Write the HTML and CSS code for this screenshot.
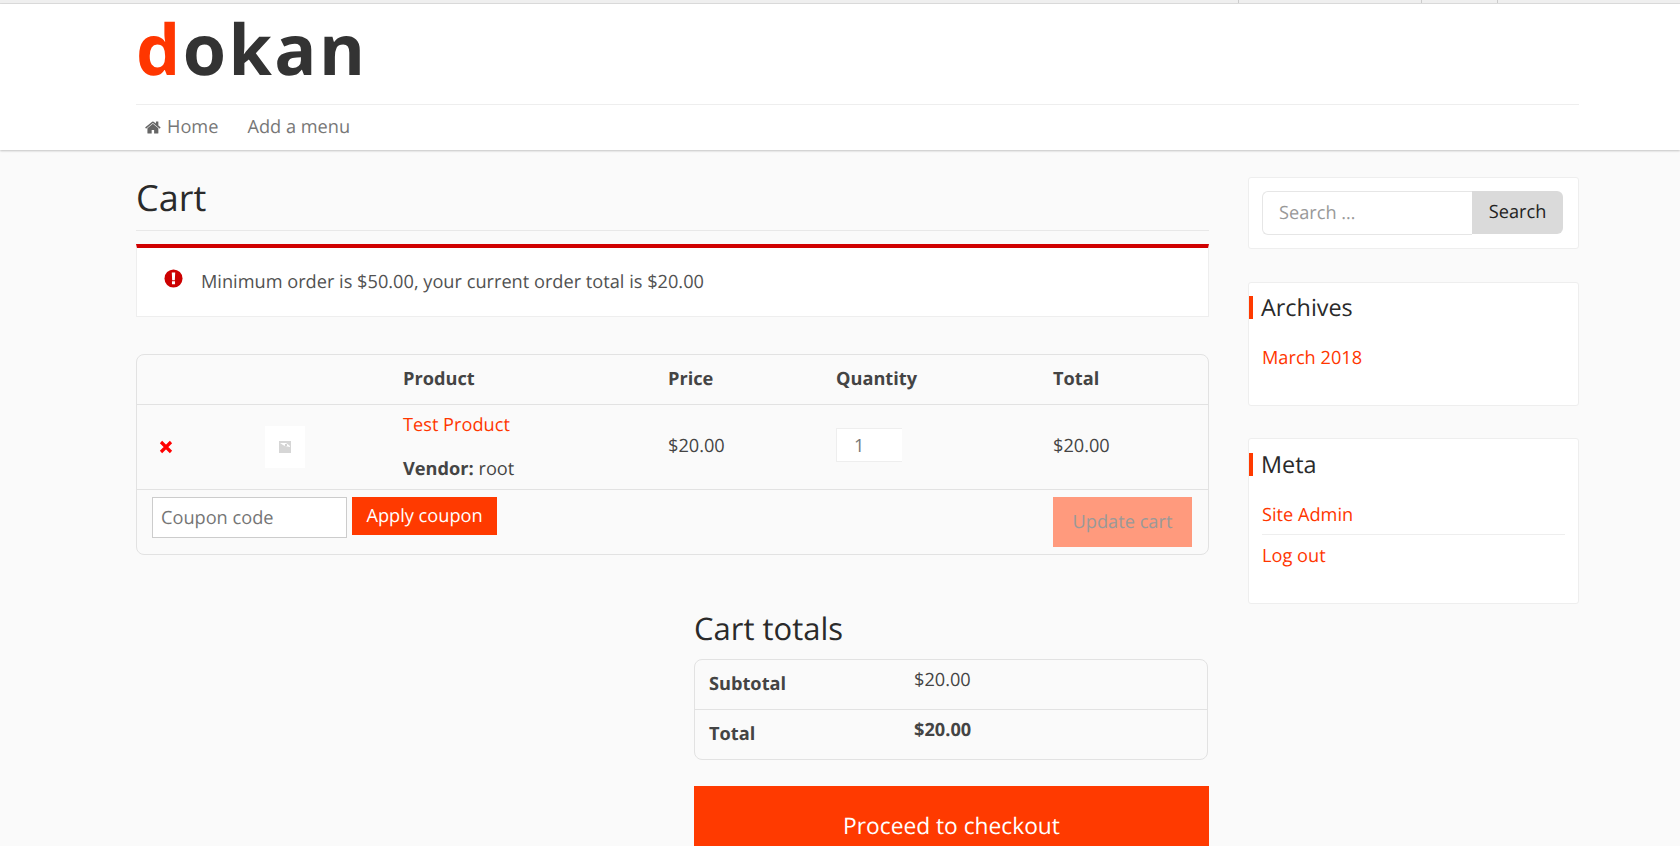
FILE: index.html
```html
<!DOCTYPE html>
<html lang="en">
<head>
<meta charset="utf-8">
<title>Cart – Dokan</title>
<link rel="stylesheet" href="styles.css">
</head>
<body>
<div class="topstrip"><i class="tick t1"></i><i class="tick t2"></i><i class="tick t3"></i></div>
<header class="site-header">
  <div class="wrap">
    <a class="logo"><span class="logo-d">d</span>okan</a>
    <nav class="nav">
      <a class="nav-link"><svg class="home-ico" viewBox="0 0 1792 1792"><path fill="#666" d="M1408 992v480q0 26-19 45t-45 19h-384v-384h-256v384h-384q-26 0-45-19t-19-45v-480q0-1 .5-3t.5-3l575-474 575 474q1 2 1 6zm223-69l-62 74q-8 9-21 11h-3q-13 0-21-7l-692-577-692 577q-12 8-24 7-13-2-21-11l-62-74q-8-10-7-23.500t11-21.500l719-599q32-26 76-26t76 26l244 204v-195q0-14 9-23t23-9h192q14 0 23 9t9 23v408l219 182q10 8 11 21.500t-7 23.500z"/></svg>Home</a>
      <a class="nav-link">Add a menu</a>
    </nav>
  </div>
</header>
<div class="wrap columns">
  <main class="main">
    <h1 class="page-title">Cart</h1>
    <div class="notice">
      <svg class="notice-ico" viewBox="0 0 20 20"><circle cx="10" cy="10" r="9.500" fill="#c00"/><path fill="#fff" d="M8.200 3.800h3.600l-.4 8h-2.800zM8.400 13h3.200v3h-3.200z"/></svg>
      <span>Minimum order is $50.00, your current order total is $20.00</span>
    </div>
    <div class="cart-box">
      <div class="cart-row cart-head">
        <span></span><span></span><b>Product</b><b>Price</b><b>Quantity</b><b>Total</b>
      </div>
      <div class="cart-row cart-item">
        <svg class="remove" viewBox="0 0 14 14"><path d="M2 2l10 10M12 2L2 12" stroke="#f00" stroke-width="3.200" fill="none"/></svg>
        <span class="thumb"><svg viewBox="0 0 12 12" class="thumb-ico"><rect width="12" height="12" fill="#d6d6d6"/><path d="M1 2h6l4 3v1L6 5 4 4z" fill="#fff"/><circle cx="7" cy="4" r=".8" fill="#999"/></svg></span>
        <div class="prod">
          <a class="link">Test Product</a>
          <div class="vendor"><b>Vendor:</b> root</div>
        </div>
        <span class="cell">$20.00</span>
        <span class="qty">1</span>
        <span class="cell">$20.00</span>
      </div>
      <div class="cart-actions">
        <span class="coupon">Coupon code</span>
        <span class="btn-apply">Apply coupon</span>
        <span class="btn-update">Update cart</span>
      </div>
    </div>
    <section class="totals">
      <h2 class="totals-title">Cart totals</h2>
      <div class="totals-box">
        <div class="totals-row"><b class="tl">Subtotal</b><span class="tv">$20.00</span></div>
        <div class="totals-row"><b class="tl">Total</b><b class="tv">$20.00</b></div>
      </div>
      <a class="checkout">Proceed to checkout</a>
    </section>
  </main>
  <aside class="side">
    <div class="widget search-w">
      <div class="search"><span class="search-input">Search …</span><span class="search-btn">Search</span></div>
    </div>
    <div class="widget archives">
      <h3 class="widget-title">Archives</h3>
      <ul class="list"><li><a class="link">March 2018</a></li></ul>
    </div>
    <div class="widget meta">
      <h3 class="widget-title">Meta</h3>
      <ul class="list"><li class="sep"><a class="link">Site Admin</a></li><li class="li2"><a class="link">Log out</a></li></ul>
    </div>
  </aside>
</div>
</body>
</html>
```
FILE: styles.css
```css
* { box-sizing: border-box; }
html, body { margin: 0; height: 846px; overflow: hidden; }
body { background: #fafafa; font: 18.200px/24px "Open Sans", sans-serif; color: #444; text-rendering: geometricPrecision; }
h1, h2, h3, ul { margin: 0; padding: 0; font-weight: 400; }
ul { list-style: none; }
.wrap { padding: 0 101px 0 136px; }

.topstrip { height: 4px; background: #efefef; border-bottom: 1px solid #ddd; display: flex; }
.tick { width: 1px; height: 3px; background: #ccc; }
.t1 { margin-left: 1238px; }
.t2 { margin-left: 182px; }
.t3 { margin-left: 75px; }

.site-header { height: 146px; background: #fff; box-shadow: 0 1px 2px rgba(0,0,0,.22); }
.logo { display: block; height: 100px; font-size: 70px; line-height: 88px; font-weight: 700; color: #333; letter-spacing: 2.400px; }
.logo-d { color: #ff3600; }
.nav { border-top: 1px solid #eee; display: flex; gap: 29px; padding: 10px 0 0 9px; color: #777; }
.nav-link { display: flex; align-items: center; }
.home-ico { width: 17px; height: 17px; margin-right: 5px; }

.columns { display: flex; justify-content: space-between; }
.main { width: 1073px; }
.page-title { font-size: 36px; line-height: 48px; color: #2a2a2a; margin-top: 24px; border-bottom: 1px solid #e8e8e8; height: 57px; }

.notice { margin-top: 13px; height: 73px; background: #fff; border: 1px solid #eee; border-top: 4px solid #d00000; display: flex; align-items: flex-start; padding: 22px 0 0 27px; color: #515151; }
.notice-ico { width: 19px; height: 19px; margin: -1px 18px 0 0; flex: none; }

.cart-box { margin-top: 37px; height: 201px; border: 1px solid #e2e2e2; border-radius: 8px; }
.cart-row { display: grid; grid-template-columns: 128px 138px 265px 168px 217px 1fr; align-items: center; }
.cart-row > :first-child { justify-self: start; }
.cart-head { height: 50px; border-bottom: 1px solid #e2e2e2; padding-bottom: 2px; }
.cart-item { height: 85px; border-bottom: 1px solid #e2e2e2; }
.remove { width: 14px; height: 14px; margin-left: 22px; }
.thumb { width: 40px; height: 42px; background: #fff; display: flex; align-items: center; justify-content: center; }
.thumb-ico { width: 12px; height: 12px; }
.prod { align-self: start; padding-top: 8px; }
.link { color: #ff3600; }
.vendor { margin-top: 20px; }
.cell { margin-top: -2px; }
.qty { width: 66px; height: 34px; margin-top: -4px; background: #fff; border: 1px solid #eee; border-right: 0; color: #777; padding: 4px 0 0 17px; line-height: 26px; }
.cart-actions { display: flex; align-items: flex-start; padding: 7px 16px 0 15px; }
.coupon { width: 195px; height: 41px; background: #fff; border: 1px solid #ccc; padding: 8px 0 0 8px; color: #757575; }
.btn-apply { margin-left: 5px; width: 145px; height: 38px; background: #ff3a00; color: #fff; text-align: center; line-height: 38px; }
.btn-update { margin-left: auto; width: 139px; height: 50px; background: #ff9a7d; color: #999; text-align: center; line-height: 50px; }

.totals { margin: 53px 0 0 558px; }
.totals-title { font-size: 31px; line-height: 42px; color: #2a2a2a; }
.totals-box { margin-top: 9px; height: 101px; margin-right: 1px; border: 1px solid #e2e2e2; border-radius: 8px; }
.totals-row { height: 49px; display: flex; padding-left: 14px; }
.totals-row + .totals-row { height: 50px; border-top: 1px solid #e2e2e2; }
.tl { width: 205px; margin-top: 12px; }
.tv { margin-top: 8px; }
.checkout { display: block; margin-top: 26px; height: 80px; background: #ff3a00; color: #fff; text-align: center; font-size: 22.750px; line-height: 80px; }

.side { width: 331px; padding-top: 27px; }
.widget { background: #fff; border: 1px solid #eee; border-radius: 3px; }
.search-w { height: 72px; padding: 13px 15px 0 13px; }
.search { display: flex; height: 44px; }
.search-input { width: 210px; border: 1px solid #e6e6e6; border-right: 0; border-radius: 6px 0 0 6px; color: #999; padding: 9px 0 0 16px; }
.search-btn { width: 91px; height: 43px; background: #dadada; color: #222; border-radius: 0 6px 6px 0; text-align: center; line-height: 42px; }
.archives { margin-top: 33px; height: 124px; }
.meta { margin-top: 32px; height: 166px; }
.widget-title { margin-top: 13px; height: 23px; border-left: 4px solid #ff3a00; padding-left: 8px; font-size: 23.400px; line-height: 23px; color: #2a2a2a; }
.meta .widget-title { margin-top: 14px; }
.list { margin-top: 27px; padding: 0 13px; }
.sep { padding-bottom: 7px; border-bottom: 1px solid #eee; }
.li2 { padding-top: 9px; }
```
